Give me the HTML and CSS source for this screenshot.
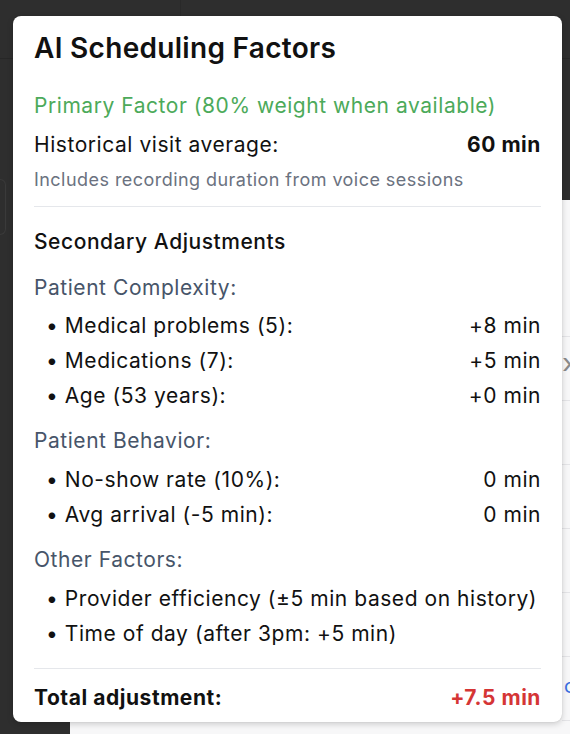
FILE: index.html
```html
<!DOCTYPE html>
<html>
<head>
<meta charset="utf-8">
<link rel="stylesheet" href="styles.css">
</head>
<body>
<div class="backdrop">
  <div class="top-bar">
    <div class="top-left"></div>
    <div class="top-mid"></div>
  </div>
  <div class="left-box"></div>
  <div class="light-panel">
    <div class="panel-row chev-row"><span class="chev">›</span></div>
    <div class="panel-row"></div>
    <div class="panel-row"></div>
    <div class="panel-row"></div>
    <div class="panel-row"></div>
    <div class="panel-row link-row"><span class="link">co</span></div>
    <div class="panel-row"></div>
  </div>
</div>

<div class="card">
  <h1 class="title">AI Scheduling Factors</h1>
  <div class="primary">Primary Factor (80% weight when available)</div>
  <div class="row hist"><span>Historical visit average:</span><span class="bold">60 min</span></div>
  <div class="note">Includes recording duration from voice sessions</div>
  <div class="divider first"></div>
  <div class="secondary">Secondary Adjustments</div>

  <div class="cat cat-first">Patient Complexity:</div>
  <div class="items items-first">
    <div class="row item"><span>• Medical problems (5):</span><span>+8 min</span></div>
    <div class="row item"><span>• Medications (7):</span><span>+5 min</span></div>
    <div class="row item"><span>• Age (53 years):</span><span>+0 min</span></div>
  </div>

  <div class="cat">Patient Behavior:</div>
  <div class="items">
    <div class="row item"><span>• No-show rate (10%):</span><span>0 min</span></div>
    <div class="row item"><span>• Avg arrival (-5 min):</span><span>0 min</span></div>
  </div>

  <div class="cat">Other Factors:</div>
  <div class="items">
    <div class="row item"><span>• Provider efficiency (±5 min based on history)</span></div>
    <div class="row item"><span>• Time of day (after 3pm: +5 min)</span></div>
  </div>

  <div class="divider second"></div>
  <div class="row total"><span>Total adjustment:</span><span class="red">+7.5 min</span></div>
</div>
</body>
</html>
```

FILE: styles.css
```css
* { box-sizing: border-box; }
html, body { margin: 0; padding: 0; }
body {
  width: 570px;
  height: 734px;
  overflow: hidden;
  background: #2e2e2e;
  font-family: Inter, "Noto Sans", sans-serif;
  position: relative;
}

.backdrop {
  width: 570px;
  height: 734px;
  display: flex;
  flex-direction: column;
}
.top-bar {
  height: 59px;
  display: flex;
  border-bottom: 1px solid #272727;
}
.top-left {
  width: 181px;
  border-right: 1px solid #292929;
}
.top-mid {
  width: 30px;
  border-bottom-left-radius: 8px;
}
.left-box {
  width: 6px;
  height: 56px;
  margin-top: 120px;
  border: 1px solid #3a3a3a;
  border-left: none;
  border-radius: 0 6px 6px 0;
}
.light-panel {
  flex: 1;
  margin-left: 70px;
  margin-top: -35px;
  background: #f7f7f8;
  display: flex;
  flex-direction: column;
  padding-top: 136px;
  padding-left: 492px;
  overflow: hidden;
}
.panel-row {
  height: 64px;
  border-top: 1px solid #e4e4e7;
  position: relative;
  flex-shrink: 0;
}
.chev-row .chev {
  color: #8a8a8a;
  font-size: 28px;
  line-height: 1;
  position: absolute;
  left: 0;
  top: 12px;
}
.link-row .link {
  color: #3b6fe0;
  font-size: 20px;
  position: absolute;
  left: 2px;
  top: 17px;
}

.card {
  position: absolute;
  left: 13px;
  top: 16px;
  width: 549px;
  height: 706px;
  background: #fff;
  border-radius: 8px;
  box-shadow: 0 2px 6px rgba(0,0,0,0.18), 0 0 1px rgba(0,0,0,0.2);
  padding: 14px 21px 0 21px;
  color: #111;
  font-size: 21px;
  letter-spacing: 0.55px;
}
.title {
  margin: 0;
  font-size: 28px;
  line-height: 36px;
  font-weight: 600;
  color: #111;
  letter-spacing: 0.3px;
}
.primary {
  margin-top: 26px;
  line-height: 28px;
  color: #4caa5a;
}
.row {
  display: flex;
  justify-content: space-between;
  line-height: 28px;
}
.hist { margin-top: 11px; }
.bold { font-weight: 700; }
.note {
  margin-top: 9px;
  font-size: 18px;
  line-height: 24px;
  color: #6b7280;
  letter-spacing: 0.45px;
}
.divider {
  height: 1px;
  background: #e5e7eb;
}
.divider.first { margin-top: 14px; }
.secondary {
  margin-top: 21px;
  line-height: 28px;
  font-weight: 500;
}
.cat {
  margin-top: 17px;
  line-height: 28px;
  color: #475569;
}
.cat-first { margin-top: 18px; }
.items {
  margin-top: 11px;
  display: flex;
  flex-direction: column;
  gap: 7px;
}
.items-first { margin-top: 10px; }
.item { padding-left: 12px; }
.divider.second { margin-top: 20px; }
.total {
  margin-top: 15px;
  font-weight: 700;
}
.red { color: #d53535; }
```
